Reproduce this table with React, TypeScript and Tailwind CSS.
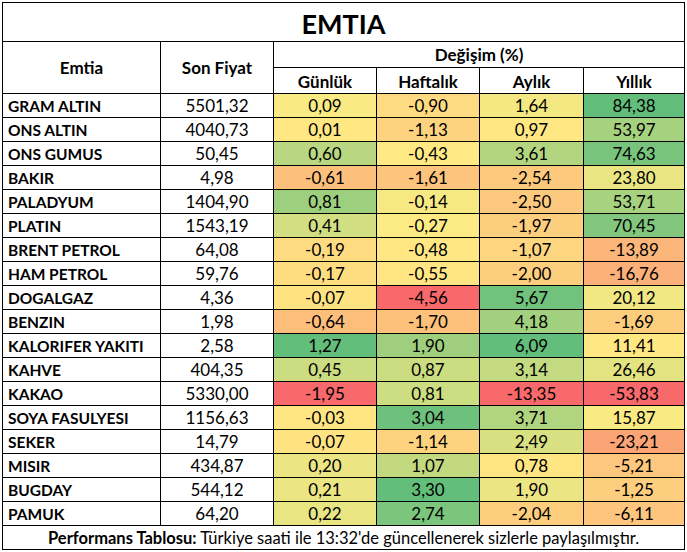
import React from "react";

type Row = [string, string, number, number, number, number];

const rows: Row[] = [
  ["GRAM ALTIN", "5501,32", 0.09, -0.9, 1.64, 84.38],
  ["ONS ALTIN", "4040,73", 0.01, -1.13, 0.97, 53.97],
  ["ONS GUMUS", "50,45", 0.6, -0.43, 3.61, 74.63],
  ["BAKIR", "4,98", -0.61, -1.61, -2.54, 23.8],
  ["PALADYUM", "1404,90", 0.81, -0.14, -2.5, 53.71],
  ["PLATIN", "1543,19", 0.41, -0.27, -1.97, 70.45],
  ["BRENT PETROL", "64,08", -0.19, -0.48, -1.07, -13.89],
  ["HAM PETROL", "59,76", -0.17, -0.55, -2.0, -16.76],
  ["DOGALGAZ", "4,36", -0.07, -4.56, 5.67, 20.12],
  ["BENZIN", "1,98", -0.64, -1.7, 4.18, -1.69],
  ["KALORIFER YAKITI", "2,58", 1.27, 1.9, 6.09, 11.41],
  ["KAHVE", "404,35", 0.45, 0.87, 3.14, 26.46],
  ["KAKAO", "5330,00", -1.95, 0.81, -13.35, -53.83],
  ["SOYA FASULYESI", "1156,63", -0.03, 3.04, 3.71, 15.87],
  ["SEKER", "14,79", -0.07, -1.14, 2.49, -23.21],
  ["MISIR", "434,87", 0.2, 1.07, 0.78, -5.21],
  ["BUGDAY", "544,12", 0.21, 3.3, 1.9, -1.25],
  ["PAMUK", "64,20", 0.22, 2.74, -2.04, -6.11],
];

const RED = [248, 105, 107];
const YEL = [255, 235, 132];
const GRN = [99, 190, 123];

function median(vals: number[]) {
  const s = [...vals].sort((a, b) => a - b);
  const n = s.length;
  return n % 2 ? s[(n - 1) / 2] : (s[n / 2 - 1] + s[n / 2]) / 2;
}

function mix(a: number[], b: number[], t: number) {
  return `rgb(${a.map((v, i) => Math.round(v + (b[i] - v) * t)).join(",")})`;
}

function scale(col: number[]) {
  const min = Math.min(...col);
  const max = Math.max(...col);
  const mid = median(col);
  return (v: number) => {
    if (v <= mid) return mix(RED, YEL, mid === min ? 1 : (v - min) / (mid - min));
    return mix(YEL, GRN, max === mid ? 1 : (v - mid) / (max - mid));
  };
}

const scales = [2, 3, 4, 5].map((i) => scale(rows.map((r) => r[i] as number)));

const fmt = (v: number) => v.toFixed(2).replace(".", ",");

const font = { fontFamily: "Lato, 'Open Sans', sans-serif" };

export default function App() {
  return (
    <div className="w-[687px] h-[552px] bg-white pt-[2px] pl-[2px] text-black" style={font}>
      <table className="border-collapse table-fixed w-[682px]">
        <colgroup>
          <col className="w-[158px]" />
          <col className="w-[113px]" />
          <col className="w-[103px]" />
          <col className="w-[103px]" />
          <col className="w-[104px]" />
          <col className="w-[101px]" />
        </colgroup>
        <tbody>
          <tr className="h-[39px]">
            <td colSpan={6} className="border border-black text-center font-bold text-[27px] leading-none p-0 pt-[2px]">
              EMTIA
            </td>
          </tr>
          <tr className="h-[26px]">
            <td rowSpan={2} className="border border-black text-center font-bold text-[17px] leading-[20px] p-0">
              Emtia
            </td>
            <td rowSpan={2} className="border border-black text-center font-bold text-[17px] leading-[20px] p-0">
              Son Fiyat
            </td>
            <td colSpan={4} className="border border-black text-center font-bold text-[17px] leading-[20px] p-0">
              Değişim (%)
            </td>
          </tr>
          <tr className="h-[26px]">
            {["Günlük", "Haftalık", "Aylık", "Yıllık"].map((h) => (
              <td key={h} className="border border-black text-center font-bold text-[17px] leading-[20px] p-0 pt-[2px]">
                {h}
              </td>
            ))}
          </tr>
          {rows.map((r) => (
            <tr key={r[0]} className="h-[24px]">
              <td className="border border-black font-bold text-[15.5px] leading-[20px] pl-[5px] py-0 whitespace-nowrap">{r[0]}</td>
              <td className="border border-black text-center text-[17px] leading-[20px] p-0">{r[1]}</td>
              {[2, 3, 4, 5].map((i, k) => (
                <td
                  key={i}
                  className="border border-black text-center text-[17px] leading-[20px] p-0"
                  style={{ backgroundColor: scales[k](r[i] as number) }}
                >
                  {fmt(r[i] as number)}
                </td>
              ))}
            </tr>
          ))}
          <tr className="h-[24px]">
            <td colSpan={6} className="border border-black text-center text-[16.5px] leading-[20px] p-0 whitespace-nowrap">
              <span className="font-bold">Performans Tablosu:</span> Türkiye saati ile 13:32'de güncellenerek sizlerle paylaşılmıştır.
            </td>
          </tr>
        </tbody>
      </table>
    </div>
  );
}
